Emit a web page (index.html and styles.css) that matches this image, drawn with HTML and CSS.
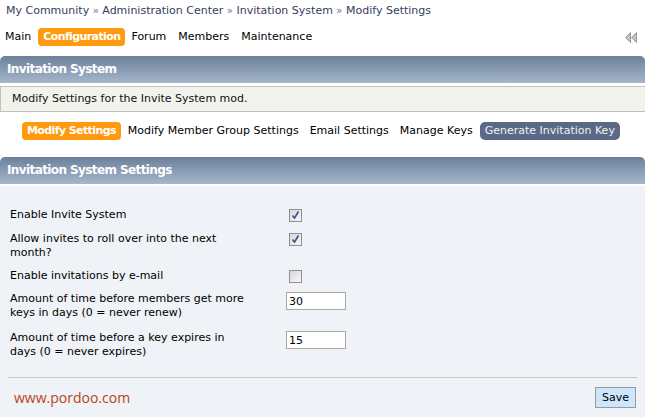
FILE: index.html
```html
<!DOCTYPE html>
<html>
<head>
<meta charset="utf-8">
<link rel="stylesheet" href="styles.css">
</head>
<body>
<div class="crumbs">
  <a href="#">My Community</a> <span class="sep">»</span> <a href="#">Administration Center</a> <span class="sep">»</span> <a href="#">Invitation System</a> <span class="sep">»</span> <a href="#">Modify Settings</a>
</div>
<div class="topnav">
  <div class="tabs">
    <a class="tab" href="#">Main</a>
    <a class="tab active" href="#">Configuration</a>
    <a class="tab" href="#">Forum</a>
    <a class="tab" href="#">Members</a>
    <a class="tab" href="#">Maintenance</a>
  </div>
  <svg class="collapse" width="12" height="11" viewBox="0 0 12 11">
    <polygon points="5.5,0.5 5.5,10.5 0.5,5.5" fill="#c4c4c4" stroke="#9a9a9a" stroke-width="1"/>
    <polygon points="11.5,0.5 11.5,10.5 6.5,5.5" fill="#c4c4c4" stroke="#9a9a9a" stroke-width="1"/>
  </svg>
</div>
<div class="catbar">Invitation System</div>
<div class="desc">Modify Settings for the Invite System mod.</div>
<div class="subnav">
  <a class="sub active" href="#">Modify Settings</a>
  <a class="sub" href="#">Modify Member Group Settings</a>
  <a class="sub" href="#">Email Settings</a>
  <a class="sub" href="#">Manage Keys</a>
  <a class="sub dark" href="#">Generate Invitation Key</a>
</div>
<div class="catbar second">Invitation System Settings</div>
<div class="panel">
  <div class="rows">
    <div class="row">
      <div class="label">Enable Invite System</div>
      <div class="ctl"><span class="check on"><svg width="11" height="11" viewBox="0 0 11 11"><path d="M2.5 5.5 L4.5 8 L8.5 1.5" fill="none" stroke="#3e4e96" stroke-width="1.6"/></svg></span></div>
    </div>
    <div class="row">
      <div class="label">Allow invites to roll over into the next month?</div>
      <div class="ctl"><span class="check on"><svg width="11" height="11" viewBox="0 0 11 11"><path d="M2.5 5.5 L4.5 8 L8.5 1.5" fill="none" stroke="#3e4e96" stroke-width="1.6"/></svg></span></div>
    </div>
    <div class="row">
      <div class="label">Enable invitations by e-mail</div>
      <div class="ctl"><span class="check"></span></div>
    </div>
    <div class="row">
      <div class="label">Amount of time before members get more keys in days (0 = never renew)</div>
      <div class="ctl"><input class="text" type="text" value="30"></div>
    </div>
    <div class="row">
      <div class="label">Amount of time before a key expires in days (0 = never expires)</div>
      <div class="ctl"><input class="text" type="text" value="15"></div>
    </div>
  </div>
  <div class="divider"></div>
  <div class="footer">
    <span class="mark">www.pordoo.com</span>
    <button class="save">Save</button>
  </div>
</div>
</body>
</html>
```
FILE: styles.css
```css
html, body {
  margin: 0;
  padding: 0;
  background: #fff;
}
body {
  font-family: "DejaVu Sans", Verdana, sans-serif;
  font-size: 11px;
  color: #000;
  width: 645px;
  height: 417px;
  overflow: hidden;
}
a {
  text-decoration: none;
  color: inherit;
}
.crumbs {
  padding: 4px 6px 0;
  height: 18px;
  color: #34405e;
}
.crumbs .sep {
  color: #6a7590;
  font-size: 10px;
}
.topnav {
  display: flex;
  align-items: center;
  justify-content: space-between;
  padding: 6px 8px 0 5px;
  height: 18px;
}
.tabs {
  display: flex;
  align-items: center;
  gap: 12px;
}
.tab {
  line-height: 18px;
  color: #000;
}
.tab.active {
  background: #ff9a0f;
  color: #fff;
  font-weight: bold;
  letter-spacing: -0.6px;
  border-radius: 4px;
  padding: 0 5px;
  margin: 0 -6px 0 -5px;
}
.collapse {
  display: block;
}
.catbar {
  margin-top: 10px;
  height: 27px;
  line-height: 27px;
  padding-left: 7px;
  background: linear-gradient(#6c809b, #a6b7cc);
  border-radius: 5px 5px 0 0;
  color: #fff;
  font-weight: bold;
  font-size: 12px;
  letter-spacing: -0.6px;
}
.desc {
  margin-top: 3px;
  height: 24px;
  line-height: 24px;
  padding-left: 11px;
  background: #f3f3ed;
  border: 1px solid #c0c0c0;
  border-right: none;
  color: #111;
}
.subnav {
  display: flex;
  align-items: center;
  gap: 11px;
  padding: 10px 0 0 22px;
  height: 18px;
}
.sub {
  line-height: 18px;
  color: #000;
}
.sub.active {
  background: #ff9a0f;
  color: #fff;
  font-weight: bold;
  letter-spacing: -0.6px;
  border-radius: 4px;
  padding: 0 5px;
  margin-right: -4px;
}
.sub.dark {
  background: #5a6a86;
  color: #f0f0f5;
  border-radius: 5px;
  padding: 0 5px;
  margin-left: -4px;
}
.catbar.second {
  margin-top: 17px;
}
.panel {
  box-sizing: border-box;
  border-top: 2px solid #fff;
  background: #eff2f6;
  height: 234px;
  padding: 22px 8px 0;
}
.rows {
  display: flex;
  flex-direction: column;
  gap: 9px;
}
.row {
  display: grid;
  grid-template-columns: 278px auto;
  align-items: start;
  line-height: 14px;
}
.row:first-child {
  margin-bottom: 1px;
}
.row:last-child {
  margin-top: 2px;
}
.label {
  padding-left: 2px;
  width: 243px;
  color: #000;
}
.ctl {
  display: flex;
}
.check {
  display: block;
  width: 11px;
  height: 11px;
  margin: 1px 0 0 3px;
  border: 1px solid #8e8e8e;
  background: linear-gradient(135deg, #d8d8d8, #f8f8f8);
}
.check svg {
  display: block;
}
.text {
  width: 54px;
  height: 14px;
  margin: 0;
  padding: 1px 2px;
  border: 1px solid #a8a8a8;
  background: #fff;
  font-family: "DejaVu Sans", Verdana, sans-serif;
  font-size: 11px;
  color: #000;
}
.divider {
  margin-top: 18px;
  border-top: 1px solid #c8c8c8;
}
.footer {
  display: flex;
  justify-content: space-between;
  align-items: center;
  padding: 9px 0 0 6px;
}
.mark {
  font-family: "Open Sans", sans-serif;
  font-size: 14px;
  color: #b8431b;
}
.save {
  margin: 0 1px 0 0;
  height: 21px;
  padding: 0 6px;
  background: #cde6fb;
  border: 1px solid #9a9a9a;
  font-family: "DejaVu Sans", Verdana, sans-serif;
  font-size: 11px;
  color: #000;
}
```
